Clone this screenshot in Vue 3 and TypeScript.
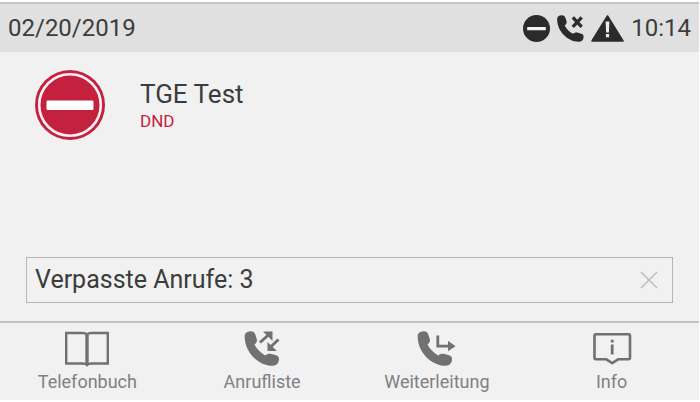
<script setup lang="ts">
import { ref } from 'vue'

interface Tab {
  id: 'book' | 'calls' | 'forward' | 'info'
  label: string
}

const handset =
  'M0.2 5C0.2 2.2 2.6 0.4 6 0.2C9 0.1 10.3 1.4 11 4L12.4 8.4C12.8 10.4 11.8 12.2 10 13.6C12.2 18 16 21.8 20.8 24.4C22.2 22.9 24 22.4 26.2 22.8L31.6 24.2C33.8 24.9 34.6 26.2 34.5 28.6C34.3 32.4 32 34.7 28.4 34.8C13.5 35 -0.2 20.5 0.2 5Z'

const tabs: Tab[] = [
  { id: 'book', label: 'Telefonbuch' },
  { id: 'calls', label: 'Anrufliste' },
  { id: 'forward', label: 'Weiterleitung' },
  { id: 'info', label: 'Info' },
]

const missedCalls = ref(3)
const noticeVisible = ref(true)
</script>

<template>
  <div class="phone">
    <header class="status">
      <span class="date">02/20/2019</span>
      <div class="indicators">
        <svg class="dnd-icon" viewBox="0 0 26 26" aria-hidden="true">
          <circle cx="13" cy="13" r="13" fill="#2b2b2b" />
          <rect x="4" y="11.5" width="18" height="3.2" rx="0.6" fill="#f2f2f2" />
        </svg>
        <svg class="missed-icon" viewBox="0 0 35 35" aria-hidden="true">
          <path :d="handset" fill="#2b2b2b" />
          <path d="M20.5 3L32 15.5M32 3L20.5 15.5" stroke="#2b2b2b" stroke-width="4.2" />
        </svg>
        <svg class="alert-icon" viewBox="0 0 33 27" aria-hidden="true">
          <path d="M16.5 1L32 26H1Z" fill="#2b2b2b" stroke="#2b2b2b" stroke-width="1.6" stroke-linejoin="round" />
          <path d="M14.6 6.5H18.4L17.9 17.4H15.1ZM14.9 19H18.1V22.2H14.9Z" fill="#ececec" />
        </svg>
        <time class="clock">10:14</time>
      </div>
    </header>

    <main class="content">
      <section class="account">
        <svg class="dnd-sign" viewBox="0 0 70 70" aria-hidden="true">
          <circle cx="35" cy="35" r="35" fill="#c4213f" />
          <circle cx="35" cy="35" r="30.8" fill="none" stroke="#fbf1f3" stroke-width="2.6" />
          <rect x="11.5" y="30.5" width="47" height="9.4" rx="1.2" fill="#fff" />
        </svg>
        <div class="identity">
          <h1 class="name">TGE Test</h1>
          <p class="state">DND</p>
        </div>
      </section>

      <section v-if="noticeVisible" class="notice">
        <span>Verpasste Anrufe: {{ missedCalls }}</span>
        <button class="close" type="button" aria-label="Schließen" @click="noticeVisible = false">
          <svg viewBox="0 0 18 18" aria-hidden="true">
            <path d="M1 1L17 17M17 1L1 17" stroke="#bdbdbd" stroke-width="1.5" />
          </svg>
        </button>
      </section>
    </main>

    <nav class="tabs">
      <button v-for="tab in tabs" :key="tab.id" class="tab" type="button">
        <svg v-if="tab.id === 'book'" class="tab-icon" viewBox="0 0 44 36" aria-hidden="true">
          <path
            d="M1.2 2H17.5C20 2 21.2 2.6 22 3.6C22.8 2.6 24 2 26.5 2H42.8V32.5H26.5C24 32.5 22.8 33.1 22 34.1C21.2 33.1 20 32.5 17.5 32.5H1.2Z"
            fill="none"
            stroke="#717171"
            stroke-width="2.4"
          />
          <path d="M22 3.5V34" stroke="#717171" stroke-width="3.4" />
        </svg>
        <svg v-else-if="tab.id === 'calls'" class="tab-icon" viewBox="-4.5 0 44 36" aria-hidden="true">
          <path :d="handset" fill="#717171" />
          <path d="M15.5 11.5L25 3M34 8.5L25.5 16.5" stroke="#717171" stroke-width="3" />
          <path d="M18.5 0.5H28V10ZM23 11V20H32.5Z" fill="#717171" />
        </svg>
        <svg v-else-if="tab.id === 'forward'" class="tab-icon" viewBox="-2.5 0 44 36" aria-hidden="true">
          <path :d="handset" fill="#717171" />
          <path d="M20.3 4.5V15.2H32" fill="none" stroke="#717171" stroke-width="2.8" />
          <path d="M30.5 9.8L38 15.2L30.5 20.2Z" fill="#717171" />
        </svg>
        <svg v-else class="tab-icon" viewBox="0 0 44 36" aria-hidden="true">
          <path
            d="M6 3.2H38.5Q40 3.2 40 5V26.5Q40 28.2 38.5 28.2H28.5L22.2 32.2L16 28.2H6Q4.5 28.2 4.5 26.5V5Q4.5 3.2 6 3.2Z"
            fill="none"
            stroke="#717171"
            stroke-width="2.6"
            stroke-linejoin="round"
          />
          <path d="M20.8 8.8H23.6V11.6H20.8ZM20.8 13.4H23.6V23.6H20.8Z" fill="#717171" />
        </svg>
        <span>{{ tab.label }}</span>
      </button>
    </nav>
  </div>
</template>

<style>
body {
  margin: 0;
  background: #fff;
}
</style>

<style scoped>
.phone {
  box-sizing: border-box;
  display: flex;
  flex-direction: column;
  min-height: 100vh;
  padding: 2px 1px 2px 0;
  font-family: Roboto, "Liberation Sans", sans-serif;
  font-size: 24px;
  line-height: 32px;
  color: #3c3c3c;
  background: #f1f1f1 content-box;
}

.status {
  display: flex;
  align-items: center;
  justify-content: space-between;
  padding: 8px;
  border-top: 2px solid #c6c6c6;
  background: #e0e0e0;
}

.indicators {
  display: flex;
  align-items: center;
  gap: 7px;
}

.dnd-icon,
.missed-icon {
  width: 27px;
  height: 27px;
}

.alert-icon {
  width: 33px;
  height: 27px;
}

.content {
  flex: 1;
  display: flex;
  flex-direction: column;
  justify-content: space-between;
  padding: 18px 26px;
}

.account {
  display: flex;
  gap: 35px;
  padding-left: 9px;
}

.dnd-sign {
  width: 70px;
  height: 70px;
}

.identity {
  padding-top: 8px;
}

.name {
  margin: 0;
  font-size: 26px;
  font-weight: 400;
  line-height: 32px;
}

.state {
  margin: 0;
  font-size: 17px;
  line-height: 22px;
  color: #c4213f;
}

.notice {
  display: flex;
  align-items: center;
  justify-content: space-between;
  padding: 6px 14px 6px 8px;
  border: 1px solid #b5b5b5;
  font-size: 25px;
}

.close {
  display: flex;
  padding: 0;
  border: 0;
  background: none;
  cursor: pointer;
}

.close svg {
  width: 18px;
  height: 18px;
}

.tabs {
  display: grid;
  grid-template-columns: repeat(4, 1fr);
  border-top: 2px solid #c2c2c2;
}

.tab {
  display: flex;
  flex-direction: column;
  align-items: center;
  gap: 4px;
  padding: 8px 0 7px;
  border: 0;
  background: none;
  font-family: inherit;
  font-size: 18px;
  line-height: 22px;
  color: #808080;
  cursor: pointer;
}

.tab-icon {
  width: 44px;
  height: 36px;
}
</style>
